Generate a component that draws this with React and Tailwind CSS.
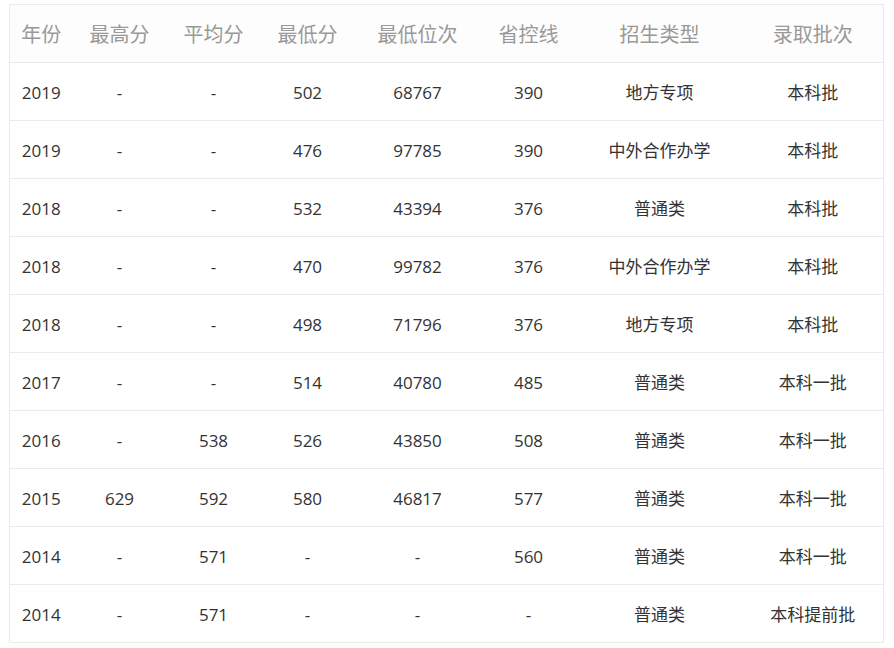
const headers = ['年份', '最高分', '平均分', '最低分', '最低位次', '省控线', '招生类型', '录取批次'];
const widths = ['w-[63px]', 'w-[94px]', 'w-[94px]', 'w-[94px]', 'w-[126px]', 'w-[96px]', 'w-[166px]', 'w-[141px]'];

const rows = [
  ['2019', '-', '-', '502', '68767', '390', '地方专项', '本科批'],
  ['2019', '-', '-', '476', '97785', '390', '中外合作办学', '本科批'],
  ['2018', '-', '-', '532', '43394', '376', '普通类', '本科批'],
  ['2018', '-', '-', '470', '99782', '376', '中外合作办学', '本科批'],
  ['2018', '-', '-', '498', '71796', '376', '地方专项', '本科批'],
  ['2017', '-', '-', '514', '40780', '485', '普通类', '本科一批'],
  ['2016', '-', '538', '526', '43850', '508', '普通类', '本科一批'],
  ['2015', '629', '592', '580', '46817', '577', '普通类', '本科一批'],
  ['2014', '-', '571', '-', '-', '560', '普通类', '本科一批'],
  ['2014', '-', '571', '-', '-', '-', '普通类', '本科提前批'],
];

export default function App() {
  return (
    <div className="min-h-screen bg-white pl-[9px] pt-[4px] font-['Open_Sans','Noto_Sans_CJK_SC',sans-serif]">
      <table className="w-[875px] table-fixed border-collapse border border-[#ebebeb]">
        <colgroup>
          {widths.map((w, i) => (
            <col key={i} className={w} />
          ))}
        </colgroup>
        <thead>
          <tr className="h-[58px] border-b border-[#ebebeb] bg-[#fdfdfd]">
            {headers.map((h) => (
              <th key={h} className="p-0 pt-[3px] text-center text-[20px] font-normal text-[#999]">
                {h}
              </th>
            ))}
          </tr>
        </thead>
        <tbody>
          {rows.map((r, i) => (
            <tr key={i} className="h-[58px] border-b border-[#ebebeb]">
              {r.map((c, j) => (
                <td key={j} className="p-0 pt-[2px] text-center text-[17px] text-[#333]">
                  {c}
                </td>
              ))}
            </tr>
          ))}
        </tbody>
      </table>
    </div>
  );
}
